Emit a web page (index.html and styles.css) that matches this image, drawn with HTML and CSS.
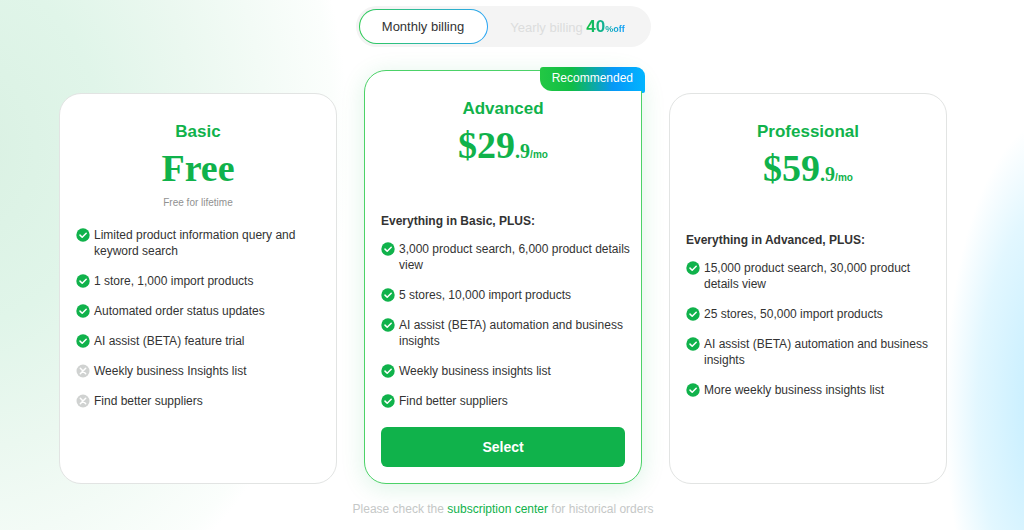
FILE: index.html
```html
<!DOCTYPE html>
<html lang="en">
<head>
    <meta charset="UTF-8">
    <meta name="viewport" content="width=device-width, initial-scale=1.0">
    <title>Pricing plans</title>
    <link rel="stylesheet" href="styles.css">
</head>
<body>
    <!-- shared list icons -->
    <svg class="sprite" aria-hidden="true">
        <symbol id="icon-check" viewBox="0 0 14 14">
            <circle cx="7" cy="7" r="6.7" fill="#10b24b"/>
            <path d="M4 7.1l2.2 2.2 4-4.1" fill="none" stroke="#fff" stroke-width="1.5" stroke-linecap="round" stroke-linejoin="round"/>
        </symbol>
        <symbol id="icon-cross" viewBox="0 0 14 14">
            <circle cx="7" cy="7" r="6.5" fill="#d0d2d1"/>
            <path d="M4.3 4.3l5.4 5.4M9.7 4.3l-5.4 5.4" fill="none" stroke="#fff" stroke-width="1.5" stroke-linecap="round"/>
        </symbol>
    </svg>

    <main class="pricing">
        <div class="billing">
            <button type="button" class="billing-btn active">Monthly billing</button>
            <button type="button" class="billing-btn">Yearly billing <span class="discount"><b>40</b><small>%off</small></span></button>
        </div>

        <div class="plans">
            <section class="plan">
                <h2>Basic</h2>
                <div class="price">Free</div>
                <p class="note">Free for lifetime</p>
                <ul>
                    <li><svg><use href="#icon-check"/></svg>Limited product information query and keyword search</li>
                    <li><svg><use href="#icon-check"/></svg>1 store, 1,000 import products</li>
                    <li><svg><use href="#icon-check"/></svg>Automated order status updates</li>
                    <li><svg><use href="#icon-check"/></svg>AI assist (BETA) feature trial</li>
                    <li><svg><use href="#icon-cross"/></svg>Weekly business Insights list</li>
                    <li><svg><use href="#icon-cross"/></svg>Find better suppliers</li>
                </ul>
            </section>

            <section class="plan recommended">
                <div class="ribbon">Recommended</div>
                <h2>Advanced</h2>
                <div class="price">$29<span class="cents">.9</span><span class="per">/mo</span></div>
                <h3>Everything in Basic, PLUS:</h3>
                <ul>
                    <li><svg><use href="#icon-check"/></svg>3,000 product search, 6,000 product details view</li>
                    <li><svg><use href="#icon-check"/></svg>5 stores, 10,000 import products</li>
                    <li><svg><use href="#icon-check"/></svg>AI assist (BETA) automation and business insights</li>
                    <li><svg><use href="#icon-check"/></svg>Weekly business insights list</li>
                    <li><svg><use href="#icon-check"/></svg>Find better suppliers</li>
                </ul>
                <button type="button" class="select-btn">Select</button>
            </section>

            <section class="plan">
                <h2>Professional</h2>
                <div class="price">$59<span class="cents">.9</span><span class="per">/mo</span></div>
                <h3>Everything in Advanced, PLUS:</h3>
                <ul>
                    <li><svg><use href="#icon-check"/></svg>15,000 product search, 30,000 product details view</li>
                    <li><svg><use href="#icon-check"/></svg>25 stores, 50,000 import products</li>
                    <li><svg><use href="#icon-check"/></svg>AI assist (BETA) automation and business insights</li>
                    <li><svg><use href="#icon-check"/></svg>More weekly business insights list</li>
                </ul>
            </section>
        </div>

        <p class="history">Please check the <a href="#">subscription center</a> for historical orders</p>
    </main>
</body>
</html>
```
FILE: styles.css
```css
* {
    box-sizing: border-box;
}
body {
    margin: 0;
    min-height: 100vh;
    font-family: "Liberation Sans", Arial, sans-serif;
    font-size: 12px;
    line-height: 16px;
    color: #333;
    background:
        radial-gradient(ellipse 110px 290px at 103% 77%, #bdebff 0%, #d2f2ff 40%, #e2f7ff 70%, rgba(255, 255, 255, 0) 100%),
        radial-gradient(ellipse 380px 500px at -3% 28%, #daf1e3 0%, #e0f5e9 35%, #ebf8f0 60%, #fbfefc 96%, rgba(255, 255, 255, 0) 100%),
        #fff;
}
h2, h3, p, ul {
    margin: 0;
    padding: 0;
}
.sprite {
    position: absolute;
    width: 0;
    height: 0;
}
.pricing {
    padding: 6px 77px 13px 59px;
}

/* billing switch */
.billing {
    display: flex;
    width: 295px;
    height: 41px;
    margin: 0 auto;
    padding: 3px;
    border-radius: 21px;
    background: #f4f4f4;
}
.billing-btn {
    flex: 1;
    padding: 0;
    border: 1px solid transparent;
    border-radius: 18px;
    background: none;
    font-family: inherit;
    font-size: 13px;
    color: #dcdddd;
}
.billing-btn.active {
    flex: 0 0 129px;
    color: #333;
    background:
        linear-gradient(#fff, #fff) padding-box,
        linear-gradient(90deg, #2fcb55, #2aa5f5) border-box;
}
.discount {
    background: linear-gradient(90deg, #12c13e, #0b9cff);
    background-clip: text;
    -webkit-background-clip: text;
    color: transparent;
    font-weight: bold;
}
.discount b {
    font-size: 17px;
}
.discount small {
    font-size: 9px;
}

/* plans */
.plans {
    display: grid;
    grid-template-columns: repeat(3, 1fr);
    align-items: end;
    gap: 27px;
    max-width: 888px;
    margin: 23px auto 0;
}
.plan {
    position: relative;
    min-height: 391px;
    padding: 28px 16px 16px;
    border: 1px solid #e2e4e3;
    border-radius: 22px;
    background: #fff;
}
.plan.recommended {
    border-color: #4cd268;
    box-shadow: 0 4px 24px rgba(16, 178, 75, 0.14);
}
.plan h2 {
    font-size: 17px;
    line-height: 20px;
    text-align: center;
    color: #10b24b;
}
.price {
    height: 52px;
    font-family: "Liberation Serif", "Times New Roman", serif;
    font-size: 38px;
    font-weight: bold;
    line-height: 52px;
    text-align: center;
    color: #10b24b;
}
.cents {
    font-size: 20px;
}
.per {
    font-family: "Liberation Sans", Arial, sans-serif;
    font-size: 10px;
}
.note {
    margin: 1px 0 16px;
    font-size: 10px;
    text-align: center;
    color: #919191;
}
.plan h3 {
    margin: 38px 0 12px;
    font-size: 12px;
    line-height: 16px;
}
.plan.recommended h3 {
    margin-top: 42px;
}
.plan ul {
    display: grid;
    gap: 14px;
    margin-right: -8px;
    list-style: none;
}
.plan li {
    display: flex;
    gap: 4px;
}
.plan li svg {
    flex: none;
    width: 14px;
    height: 14px;
    margin-top: 1px;
}
.select-btn {
    width: 100%;
    height: 40px;
    margin-top: 18px;
    border: 0;
    border-radius: 6px;
    background: #10b24b;
    font-family: inherit;
    font-size: 14px;
    font-weight: bold;
    color: #fff;
}
.ribbon {
    position: absolute;
    top: -4px;
    right: -4px;
    padding: 3px 12px 5px;
    border-radius: 3px 9px 0 12px;
    background: linear-gradient(90deg, #23c844, #10bd46 30%, #0798f8 70%, #00b4ff);
    color: #fff;
}
/* folded end of the ribbon */
.ribbon::after {
    content: "";
    position: absolute;
    top: 100%;
    right: 0;
    width: 3px;
    height: 2px;
    border-radius: 0 0 2px 0;
    background: #00b4ff;
}

.history {
    margin-top: 17px;
    text-align: center;
    color: #c5c8c7;
}
.history a {
    color: #10b24b;
    text-decoration: none;
}
```
